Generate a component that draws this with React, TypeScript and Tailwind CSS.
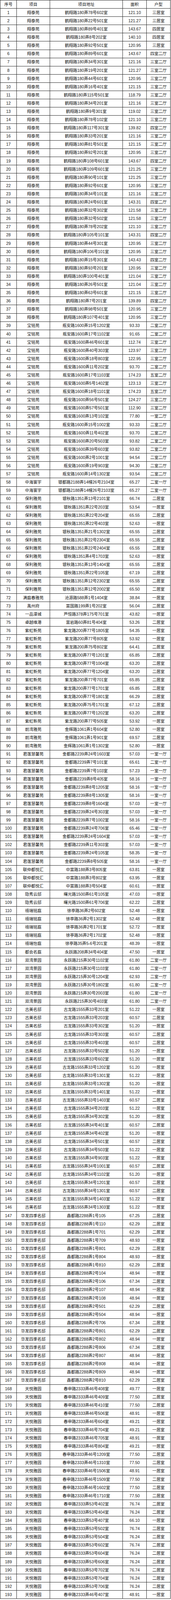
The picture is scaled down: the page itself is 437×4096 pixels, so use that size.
type Row = [string, string, string, string];

// [项目, 路名前缀, [[门牌, 面积, 户型], ...]]
type Group = [string, string, [string, string, string][]];

const groups: Group[] = [
  [
    "翔泰苑",
    "鹤翔路180弄",
    [
      ["78号602室", "121.10", "三居室"],
      ["22号501室", "121.27", "三居室"],
      ["89号401室", "143.67", "四居室"],
      ["8号202室", "140.10", "四居室"],
      ["92号501室", "120.95", "三居室"],
      ["89号601室", "143.67", "四室二厅"],
      ["34号301室", "121.16", "三室二厅"],
      ["19号201室", "121.27", "三室二厅"],
      ["44号601室", "120.95", "三室二厅"],
      ["16号401室", "121.15", "三室二厅"],
      ["115号501室", "118.79", "三室二厅"],
      ["34号201室", "121.16", "三室二厅"],
      ["9号301室", "119.02", "三室二厅"],
      ["78号102室", "121.10", "三室二厅"],
      ["117号301室", "139.82", "四室二厅"],
      ["33号201室", "121.16", "三室二厅"],
      ["81号501室", "121.15", "三室二厅"],
      ["92号201室", "120.95", "三室二厅"],
      ["108号601室", "143.67", "四室二厅"],
      ["109号601室", "121.25", "三室二厅"],
      ["90号101室", "121.25", "三室二厅"],
      ["92号601室", "120.95", "三室二厅"],
      ["34号101室", "121.16", "三室二厅"],
      ["24号601室", "143.31", "四室二厅"],
      ["32号302室", "121.58", "三室二厅"],
      ["32号502室", "121.58", "三室二厅"],
      ["78号202室", "121.10", "三室二厅"],
      ["105号101室", "143.31", "四室二厅"],
      ["44号301室", "120.95", "三室二厅"],
      ["106号101室", "120.95", "三室二厅"],
      ["15号301室", "143.43", "四室二厅"],
      ["93号201室", "120.95", "三室二厅"],
      ["100号401室", "121.04", "三室二厅"],
      ["26号501室", "121.04", "三室二厅"],
      ["63号601室", "121.15", "三室二厅"],
      ["7号201室", "139.89", "四室二厅"],
      ["98号501室", "120.95", "三室二厅"],
      ["107号401室", "120.95", "三室二厅"],
    ],
  ],
  [
    "宝铭苑",
    "瓶安路1600弄",
    [
      ["15号1202室", "93.33", "二室二厅"],
      ["17号1102室", "91.65", "二室二厅"],
      ["46号601室", "112.74", "三室二厅"],
      ["40号303室", "123.97", "三室二厅"],
      ["18号803室", "122.95", "三室二厅"],
      ["11号202室", "93.70", "二室二厅"],
      ["17号1103室", "174.23", "五室二厅"],
      ["5号1402室", "123.13", "三室二厅"],
      ["18号1101室", "174.23", "五室二厅"],
      ["56号501室", "124.27", "三室二厅"],
      ["57号501室", "112.90", "三室二厅"],
      ["13号102室", "77.80", "一室二厅"],
      ["15号1002室", "93.33", "二室二厅"],
      ["11号402室", "93.70", "二室二厅"],
      ["20号503室", "93.82", "二室二厅"],
      ["39号603室", "93.82", "二室二厅"],
      ["2号1001室", "94.54", "二室二厅"],
      ["19号903室", "94.30", "二室二厅"],
      ["14号1302室", "93.54", "二室二厅"],
    ],
  ],
  [
    "中海寰宇",
    "银都路2188弄14幢",
    [
      ["26号2104室", "65.27", "二室一厅"],
      ["26号2103室", "65.27", "二室一厅"],
    ],
  ],
  [
    "保利雅苑",
    "银秋路1351弄",
    [
      ["13号2101室", "66.74", "二居室"],
      ["22号203室", "53.54", "一居室"],
      ["22号204室", "65.55", "二居室"],
      ["22号403室", "52.63", "一居室"],
      ["21号1302室", "65.55", "二居室"],
      ["22号2304室", "65.55", "二居室"],
      ["22号2404室", "65.55", "二居室"],
      ["4号1703室", "52.63", "一居室"],
      ["13号1404室", "65.55", "二居室"],
      ["22号105室", "67.19", "二居室"],
      ["12号2302室", "65.55", "二居室"],
      ["12号2002室", "65.50", "二居室"],
    ],
  ],
  ["满庭春雅苑", "沧源路588弄", [["1号1404室", "38.84", "一居室"]]],
  ["禹州府", "富国路199弄", [["1号202室", "56.04", "二居室"]]],
  ["一品漫城", "芦恒路378弄", [["175号701室", "43.82", "一居室"]]],
  ["卓越维港", "富岩路60弄", [["81号404室", "53.26", "二居室"]]],
  [
    "紫虹新苑",
    "紫龙路200弄",
    [
      ["77号1805室", "54.35", "一居室"],
      ["77号805室", "53.92", "一居室"],
      ["75号802室", "64.41", "二居室"],
      ["77号1201室", "65.85", "二居室"],
      ["77号1004室", "63.20", "二居室"],
      ["77号1204室", "63.20", "二居室"],
      ["77号701室", "65.85", "二居室"],
      ["77号1701室", "65.85", "二居室"],
      ["77号1801室", "66.29", "二居室"],
      ["75号1701室", "67.12", "二居室"],
      ["77号1202室", "63.20", "二居室"],
      ["77号505室", "53.92", "一居室"],
    ],
  ],
  [
    "前湾雅苑",
    "金辉路1061弄",
    [
      ["1号604室", "52.80", "一居室"],
      ["1号901室", "69.57", "二居室"],
      ["1号1302室", "52.80", "一居室"],
    ],
  ],
  [
    "君莲慧馨苑",
    "金都路2239弄",
    [
      ["24号1603室", "57.03", "一室一厅"],
      ["7号101室", "65.61", "二室一厅"],
      ["7号103室", "57.23", "一室一厅"],
      ["8号405室", "58.16", "一室一厅"],
      ["8号1205室", "58.16", "一室一厅"],
      ["8号1305室", "58.16", "一室一厅"],
      ["8号1604室", "57.03", "一室一厅"],
      ["24号303室", "57.03", "一室一厅"],
      ["7号1002室", "58.16", "一室一厅"],
      ["24号706室", "65.46", "二室一厅"],
      ["24号1604室", "57.03", "一室一厅"],
      ["11号303室", "57.03", "一室一厅"],
      ["24号105室", "58.35", "一室一厅"],
      ["8号505室", "58.16", "一室一厅"],
    ],
  ],
  [
    "联仲都悦汇",
    "中富路188弄",
    [
      ["3号805室", "63.81", "一居室"],
      ["3号802室", "63.95", "一居室"],
      ["3号504室", "60.61", "一居室"],
    ],
  ],
  [
    "隐秀云邸",
    "曙光路1500弄",
    [
      ["61号105室", "47.03", "一居室"],
      ["61号706室", "62.22", "二居室"],
    ],
  ],
  [
    "禧瑞铭庭",
    "徐亭路36弄",
    [
      ["2号602室", "52.48", "一居室"],
      ["2号1302室", "52.48", "一居室"],
      ["2号1701室", "52.72", "一居室"],
      ["2号1702室", "52.48", "一居室"],
    ],
  ],
  ["禧瑞怡庭", "徐亭路35弄", [["5-6号201室", "48.39", "一居室"]]],
  ["都会名庭", "永跃路208弄", [["34号404室", "47.50", "一居室"]]],
  [
    "双湾景园",
    "永跃路215弄",
    [
      ["30号1102室", "61.80", "二室一厅"],
      ["30号1103室", "61.80", "二室一厅"],
      ["30号1204室", "62.93", "二室一厅"],
      ["30号1802室", "61.80", "二室一厅"],
      ["30号2003室", "61.80", "二室一厅"],
      ["30号403室", "61.80", "二室一厅"],
    ],
  ],
  [
    "古美名邸",
    "古龙路1555弄",
    [
      ["33号201室", "51.22", "一居室"],
      ["33号203室", "60.57", "二居室"],
      ["33号302室", "51.20", "一居室"],
      ["33号303室", "60.57", "二居室"],
      ["33号403室", "60.57", "二居室"],
      ["33号502室", "51.20", "一居室"],
      ["33号602室", "51.20", "一居室"],
      ["33号1202室", "51.20", "一居室"],
      ["33号1301室", "51.22", "一居室"],
      ["33号1302室", "51.20", "一居室"],
      ["33号1401室", "51.22", "一居室"],
      ["33号1403室", "60.57", "二居室"],
      ["34号203室", "51.22", "一居室"],
      ["34号302室", "51.20", "一居室"],
      ["34号401室", "60.57", "二居室"],
      ["34号402室", "51.20", "一居室"],
      ["34号501室", "60.57", "二居室"],
      ["34号503室", "51.22", "一居室"],
      ["34号903室", "51.22", "一居室"],
      ["34号1001室", "60.57", "二居室"],
      ["34号1102室", "51.20", "一居室"],
      ["34号1201室", "60.57", "二居室"],
      ["34号1301室", "60.57", "二居室"],
      ["34号1403室", "51.22", "一居室"],
      ["34号1303室", "51.22", "一居室"],
    ],
  ],
  [
    "华发四季名邸",
    "鑫都路2288弄",
    [
      ["1号105", "67.25", "二居室"],
      ["1号110", "62.29", "二居室"],
      ["1号701", "62.29", "二居室"],
      ["1号709", "48.93", "一居室"],
      ["1号801", "62.29", "二居室"],
      ["1号804", "48.93", "一居室"],
      ["1号810", "62.29", "二居室"],
      ["2号104", "48.94", "一居室"],
      ["2号106", "67.34", "二居室"],
      ["2号107", "48.94", "一居室"],
      ["2号108", "48.94", "一居室"],
      ["2号501", "62.29", "二居室"],
      ["2号504", "48.94", "一居室"],
      ["2号706", "67.34", "二居室"],
      ["2号801", "62.29", "二居室"],
      ["2号802", "48.94", "一居室"],
      ["2号806", "67.34", "二居室"],
      ["2号807", "48.94", "一居室"],
      ["2号808", "48.94", "一居室"],
      ["2号809", "48.94", "一居室"],
      ["2号810", "62.29", "二居室"],
    ],
  ],
  [
    "天悦雅园",
    "春申路2333弄",
    [
      ["46号408室", "49.77", "一居室"],
      ["46号409室", "77.50", "二居室"],
      ["46号410室", "77.50", "二居室"],
      ["46号506室", "48.91", "一居室"],
      ["46号604室", "49.21", "一居室"],
      ["46号704室", "49.21", "一居室"],
      ["46号705室", "48.91", "一居室"],
      ["46号804室", "49.21", "一居室"],
      ["46号1209室", "77.50", "二居室"],
      ["46号1310室", "77.50", "二居室"],
      ["46号1506室", "48.91", "一居室"],
      ["46号1509室", "77.50", "二居室"],
      ["46号1602室", "77.50", "二居室"],
      ["46号1710室", "77.50", "二居室"],
      ["53号402室", "76.74", "二居室"],
      ["53号404室", "76.24", "二居室"],
      ["53号407室", "66.10", "一居室"],
      ["53号502室", "76.74", "二居室"],
      ["53号504室", "76.24", "二居室"],
      ["53号602室", "76.74", "二居室"],
      ["53号604室", "76.24", "二居室"],
      ["53号606室", "76.24", "二居室"],
      ["53号702室", "76.74", "二居室"],
      ["53号704室", "76.24", "二居室"],
      ["53号706室", "76.24", "二居室"],
      ["46号407室", "48.91", "一居室"],
    ],
  ],
];

const rows: Row[] = groups.flatMap(([name, prefix, items]) =>
  items.map(([no, area, type]) => [name, prefix + no, area, type] as Row)
);

function TableRow({ cells }: { cells: string[] }) {
  return (
    <div className="flex h-[21.108px] border-b border-[#262626]">
      <div className="flex w-[42px] shrink-0 items-center justify-center border-r border-[#262626]">
        {cells[0]}
      </div>
      <div className="flex w-[85px] shrink-0 items-center justify-center border-r border-[#262626]">
        {cells[1]}
      </div>
      <div className="flex w-[186px] shrink-0 items-center justify-center whitespace-nowrap border-r border-[#262626]">
        {cells[2]}
      </div>
      <div className="flex w-[61px] shrink-0 items-center justify-center border-r border-[#262626]">
        {cells[3]}
      </div>
      <div className="flex flex-1 items-center justify-center border-r border-[#262626]">
        {cells[4]}
      </div>
    </div>
  );
}

export default function App() {
  return (
    <div className="w-[437px] bg-white">
      <div className="w-[436px] border-l border-t border-[#262626] text-[10.5px] leading-none text-[#151515] [font-family:'Liberation_Sans','Noto_Sans_CJK_SC',sans-serif]">
        <TableRow cells={["序号", "项目", "项目地址", "面积", "户型"]} />
        {rows.map((r, i) => (
          <TableRow key={i} cells={[String(i + 1), ...r]} />
        ))}
      </div>
    </div>
  );
}
